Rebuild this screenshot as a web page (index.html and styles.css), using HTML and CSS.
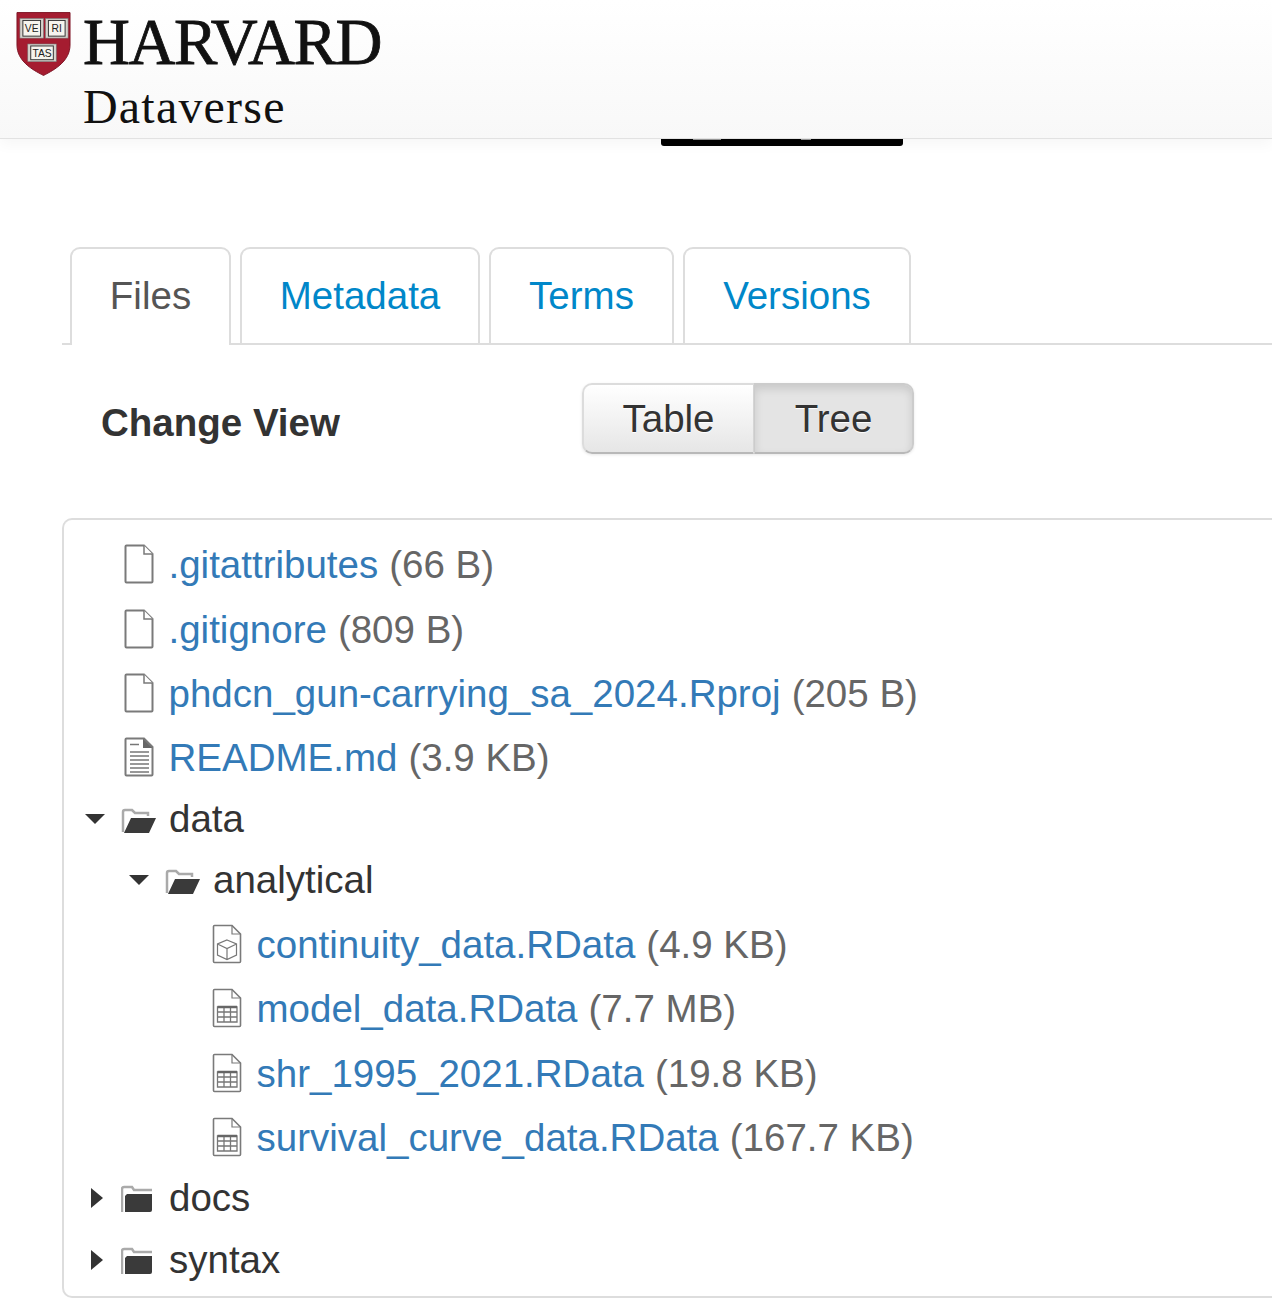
FILE: index.html
```html
<!DOCTYPE html>
<html lang="en">
<head>
<meta charset="utf-8">
<title>Harvard Dataverse</title>
<link rel="stylesheet" href="styles.css">
</head>
<body>
<svg class="defs" width="0" height="0" aria-hidden="true">
  <symbol id="doc" viewBox="0 0 30 40">
    <path d="M2.5 1.5H20L28.500 10V37.500Q28.500 38.500 27.500 38.500H2.500Q1.500 38.500 1.500 37.500V2.500Q1.500 1.500 2.500 1.500Z" fill="#fff" stroke="#7a7a7a" stroke-width="2"/>
    <path d="M20 1.500V10H28.500" fill="#fff" stroke="#7a7a7a" stroke-width="1.500"/>
  </symbol>
  <symbol id="doc-text" viewBox="0 0 30 40">
    <path d="M2.5 1.500H20L28.500 10V37.500Q28.500 38.500 27.500 38.500H2.500Q1.500 38.500 1.500 37.500V2.500Q1.500 1.500 2.500 1.500Z" fill="#fff" stroke="#7a7a7a" stroke-width="2"/>
    <path d="M19 1.500L28.500 11H19Z" fill="#666"/>
    <path d="M6 7.500H15M6 15H25M6 19H25M6 23H25M6 27H25M6 31H25M6 35H25" stroke="#777" stroke-width="1.500"/>
  </symbol>
  <symbol id="doc-cube" viewBox="0 0 30 40">
    <path d="M2.5 1.500H20L28.500 10V37.500Q28.500 38.500 27.500 38.500H2.500Q1.500 38.500 1.500 37.500V2.500Q1.500 1.500 2.500 1.500Z" fill="#fff" stroke="#7a7a7a" stroke-width="1.600"/>
    <path d="M20 1.500V10H28.500" fill="none" stroke="#7a7a7a" stroke-width="1.200"/>
    <path d="M15 16L24.500 20V31L15 35.500L5.500 31V20ZM5.500 20L15 24.500L24.500 20M15 24.500V35.500" fill="none" stroke="#777" stroke-width="1.200"/>
  </symbol>
  <symbol id="doc-table" viewBox="0 0 30 40">
    <path d="M2.5 1.500H20L28.500 10V37.500Q28.500 38.500 27.500 38.500H2.500Q1.500 38.500 1.500 37.500V2.500Q1.500 1.500 2.500 1.500Z" fill="#fff" stroke="#7a7a7a" stroke-width="1.600"/>
    <path d="M20 1.500V10H28.500" fill="none" stroke="#7a7a7a" stroke-width="1.200"/>
    <path d="M5.500 19H25V34H5.500ZM5.500 24H25M5.500 29H25M12 19V34M18.500 19V34" fill="none" stroke="#777" stroke-width="1.300"/>
    <path d="M5.500 19H25" stroke="#666" stroke-width="2.500"/>
  </symbol>
  <symbol id="folder-open" viewBox="0 0 36 26">
    <path d="M2 24V4Q2 2 4 2H11L14 5H27V8" fill="none" stroke="#aaa" stroke-width="2.500"/>
    <path d="M3 25L10 10H35L28 25Z" fill="#3a3a3a"/>
  </symbol>
  <symbol id="folder-closed" viewBox="0 0 32 28">
    <path d="M1 27V4Q1 2 3 2H11L13 5H31" fill="none" stroke="#aaa" stroke-width="2.500"/>
    <path d="M4 11L6 9H31V25Q31 27 29 27H4Z" fill="#3a3a3a"/>
  </symbol>
</svg>

<header class="site-header">
  <svg class="shield" viewBox="0 0 56 66" aria-hidden="true">
    <path d="M1 1H55V34C55 50 40 59 28 65C16 59 1 50 1 34Z" fill="#a51c30" stroke="#7d1526" stroke-width="1"/>
    <rect class="book-edge" x="4" y="7" width="24" height="20"/>
    <rect class="book-edge" x="30" y="7" width="23" height="20"/>
    <rect class="book-edge" x="12" y="33" width="29" height="18"/>
    <rect class="book" x="7" y="9" width="18" height="16"/>
    <rect class="book" x="33" y="9" width="17" height="16"/>
    <rect class="book" x="15" y="35" width="23" height="14"/>
    <text class="book-text" x="16" y="21">VE</text>
    <text class="book-text" x="41.500" y="21">RI</text>
    <text class="book-text" x="26.500" y="46">TAS</text>
  </svg>
  <div class="brand">
    <div class="brand-name">HARVARD</div>
    <div class="brand-sub">Dataverse</div>
  </div>
</header>
<div class="redaction"></div>

<main class="content">
  <nav class="tabs">
    <a class="tab active">Files</a>
    <a class="tab tab-metadata">Metadata</a>
    <a class="tab tab-terms">Terms</a>
    <a class="tab tab-versions">Versions</a>
  </nav>

  <div class="view-row">
    <h2 class="view-label">Change View</h2>
    <div class="toggle">
      <button class="toggle-btn">Table</button>
      <button class="toggle-btn on">Tree</button>
    </div>
  </div>

  <section class="tree">
    <div class="row file depth0"><svg class="ficon"><use href="#doc"/></svg><a>.gitattributes</a> <span class="size">(66 B)</span></div>
    <div class="row file depth0"><svg class="ficon"><use href="#doc"/></svg><a>.gitignore</a> <span class="size">(809 B)</span></div>
    <div class="row file depth0"><svg class="ficon"><use href="#doc"/></svg><a>phdcn_gun-carrying_sa_2024.Rproj</a> <span class="size">(205 B)</span></div>
    <div class="row file depth0"><svg class="ficon"><use href="#doc-text"/></svg><a>README.md</a> <span class="size">(3.9 KB)</span></div>
    <div class="row dir"><i class="caret down"></i><svg class="dicon"><use href="#folder-open"/></svg>data</div>
    <div class="row dir sub"><i class="caret down"></i><svg class="dicon"><use href="#folder-open"/></svg>analytical</div>
    <div class="row file depth1"><svg class="ficon"><use href="#doc-cube"/></svg><a>continuity_data.RData</a> <span class="size">(4.9 KB)</span></div>
    <div class="row file depth1"><svg class="ficon"><use href="#doc-table"/></svg><a>model_data.RData</a> <span class="size">(7.7 MB)</span></div>
    <div class="row file depth1"><svg class="ficon"><use href="#doc-table"/></svg><a>shr_1995_2021.RData</a> <span class="size">(19.8 KB)</span></div>
    <div class="row file depth1"><svg class="ficon"><use href="#doc-table"/></svg><a>survival_curve_data.RData</a> <span class="size">(167.7 KB)</span></div>
    <div class="row dir"><i class="caret right"></i><svg class="dicon closed"><use href="#folder-closed"/></svg>docs</div>
    <div class="row dir"><i class="caret right"></i><svg class="dicon closed"><use href="#folder-closed"/></svg>syntax</div>
  </section>
</main>
</body>
</html>
```

FILE: styles.css
```css
* { box-sizing: border-box; }
html, body { margin: 0; padding: 0; background: #fff; overflow: hidden; }
body { font-family: "Liberation Sans", Arial, sans-serif; font-size: 38.5px; color: #333; height: 1305px; }
.defs { position: absolute; }

.site-header {
  height: 139px;
  display: flex;
  align-items: flex-start;
  padding: 11px 0 0 16px;
  background: linear-gradient(#fff, #f8f8f8);
  border-bottom: 1px solid #e2e2e2;
  box-shadow: 0 5px 14px rgba(0,0,0,.04);
  position: relative;
  z-index: 1;
}
.shield { width: 55px; height: 66px; flex: none; }
.book-edge { fill: #d6d3cd; stroke: #777; stroke-width: .6; }
.book { fill: #f6f4ee; stroke: #333; stroke-width: 1; }
.book-text { font-family: "Liberation Sans", sans-serif; font-size: 10.500px; fill: #222; text-anchor: middle; }
.brand { margin-left: 12px; font-family: "Liberation Serif", serif; color: #111; }
.brand-name { font-size: 65px; line-height: 62px; letter-spacing: -1.4px; -webkit-text-stroke: .8px #111; }
.brand-sub { font-size: 48px; line-height: 48px; margin-top: 10px; letter-spacing: 1.2px; }

.redaction {
  width: 242px;
  height: 7px;
  margin-left: 661px;
  background:
    linear-gradient(#999, #999) 32px 0 / 28px 1px no-repeat,
    linear-gradient(#999, #999) 140px 0 / 10px 1px no-repeat,
    #000;
  border-radius: 0 0 3px 3px;
}

.content { padding: 101px 0 0 62px; }

.tabs {
  display: flex;
  height: 98px;
  padding-left: 8px;
  gap: 9px;
  border-bottom: 2px solid #ddd;
}
.tab {
  height: 96px;
  padding-top: 26px;
  text-align: center;
  line-height: 42px;
  color: #0087c9;
  border: 2px solid #ddd;
  border-bottom: 0;
  border-radius: 10px 10px 0 0;
  background: #fff;
}
.tab.active { color: #555; width: 161px; height: 98px; }
.tab-metadata { width: 240px; }
.tab-terms { width: 185px; }
.tab-versions { width: 228px; }

.view-row {
  display: flex;
  align-items: flex-start;
  height: 173px;
  padding: 38px 0 0 39px;
}
.view-label { margin: 0; width: 481px; font-size: 38.5px; font-weight: 700; line-height: 80px; height: 80px; }
.toggle {
  display: flex;
  width: 332px;
  height: 71px;
  border-radius: 10px;
  box-shadow: 0 1px 3px rgba(0,0,0,.1);
}
.toggle-btn {
  font: inherit;
  color: #333;
  border: 2px solid #dcdcdc;
  border-bottom-color: #b8b8b8;
  background: linear-gradient(#fff, #e6e6e6);
  text-shadow: 0 1px 1px #fff;
  padding: 0;
  height: 71px;
}
.toggle-btn:first-child { width: 172px; border-radius: 10px 0 0 10px; border-right: 1px solid #d5d5d5; }
.toggle-btn.on {
  width: 160px;
  background: #e4e4e4;
  border-color: #ccc;
  border-bottom-color: #b8b8b8;
  border-left: 1px solid #ccc;
  border-radius: 0 10px 10px 0;
  box-shadow: inset 0 4px 8px rgba(0,0,0,.12);
}

.tree {
  height: 780px;
  border: 2px solid #ddd;
  border-right: 0;
  border-radius: 10px 0 0 10px;
  padding-top: 13px;
}
.row { display: flex; align-items: center; white-space: pre; line-height: 44px; }
.row a { color: #337ab7; }
.size { color: #666; margin-left: 11px; }
.file { height: 64.4px; }
.dir { height: 61.5px; color: #333; padding-left: 21px; }
.file + .dir { margin-top: -2.4px; }
.dir + .file { margin-top: 1.4px; }
.dir.sub { padding-left: 65px; }
.depth0 { padding-left: 60px; }
.depth1 { padding-left: 148px; }
.ficon { width: 30px; height: 40px; margin-right: 14.5px; flex: none; transform: translateY(-1px); }
.dicon { width: 36px; height: 26px; margin: 4px 12px 0 0; flex: none; }
.dicon.closed { width: 32px; height: 28px; margin: 2px 16px 0 0; }
.caret { width: 20px; margin-right: 16px; flex: none; display: block; height: 0; }
.caret.down { border-left: 10px solid transparent; border-right: 10px solid transparent; border-top: 10px solid #333; }
.caret.right { width: 12px; margin: 0 18px 0 6px; border-top: 10px solid transparent; border-bottom: 10px solid transparent; border-left: 12px solid #333; }
```
